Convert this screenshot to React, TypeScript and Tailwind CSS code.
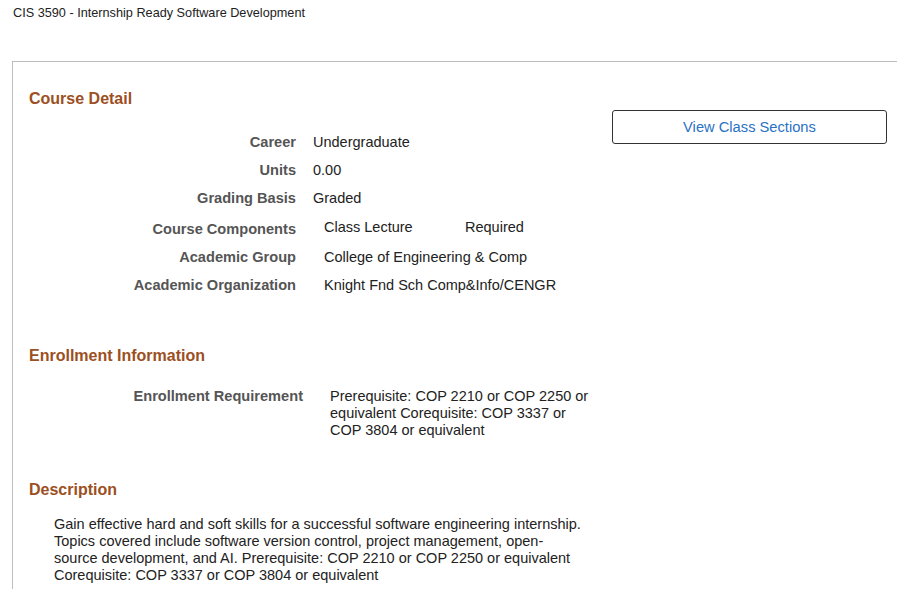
import React from 'react'

const font = { fontFamily: '"Liberation Sans", Arial, sans-serif' }

function Row({ label, children, indent = false, className = '' }: { label: string; children: React.ReactNode; indent?: boolean; className?: string }) {
  return (
    <div className={`flex h-[28px] items-center ${className}`}>
      <div className="w-[267px] text-right text-[14.6px] font-bold text-[#555555]">{label}</div>
      <div className={indent ? 'pl-[28px]' : 'pl-[17px]'}>{children}</div>
    </div>
  )
}

export default function App() {
  return (
    <div style={font} className="min-h-screen bg-white text-[14.5px] text-[#222222]">
      <div className="h-[61px] pl-[13px] pt-[6px] text-[12.7px] leading-[14px] text-[#222222]">
        CIS 3590 - Internship Ready Software Development
      </div>

      <div className="ml-[12px] border-l border-t border-[#bdbdbd] pl-[16px] pt-[27px] pb-[20px]">
        <div className="flex">
          <div className="flex-1">
            <h2 className="text-[16px] font-bold leading-[20px] text-[#9c4f22]">Course Detail</h2>
            <div className="mt-[20px]">
              <Row label="Career">Undergraduate</Row>
              <Row label="Units">0.00</Row>
              <Row label="Grading Basis">Graded</Row>
              <Row label="Course Components" indent className="mt-[3px]">
                <div className="flex -translate-y-[2px]">
                  <span className="w-[141px]">Class Lecture</span>
                  <span>Required</span>
                </div>
              </Row>
              <Row label="Academic Group" indent>College of Engineering &amp; Comp</Row>
              <Row label="Academic Organization" indent>Knight Fnd Sch Comp&amp;Info/CENGR</Row>
            </div>
          </div>
          <div className="pr-[10px] pt-[21px]">
            <button className="h-[34px] w-[275px] rounded-[3px] border border-[#333333] bg-white text-[14.7px] text-[#2a72c4]">
              View Class Sections
            </button>
          </div>
        </div>

        <h2 className="mt-[46px] text-[16px] font-bold leading-[20px] text-[#9c4f22]">Enrollment Information</h2>
        <div className="mt-[22px] flex leading-[17px]">
          <div className="w-[274px] text-right text-[14.6px] font-bold text-[#555555]">Enrollment Requirement</div>
          <div className="w-[297px] pl-[27px]">
            Prerequisite: COP 2210 or COP 2250 or equivalent Corequisite: COP 3337 or COP 3804 or equivalent
          </div>
        </div>

        <h2 className="mt-[41px] text-[16px] font-bold leading-[20px] text-[#9c4f22]">Description</h2>
        <p className="mt-[16px] w-[555px] pl-[25px] leading-[17px]">
          Gain effective hard and soft skills for a successful software engineering internship. Topics covered include software version control, project management, open-source development, and AI. Prerequisite: COP 2210 or COP 2250 or equivalent Corequisite: COP 3337 or COP 3804 or equivalent
        </p>
      </div>
    </div>
  )
}
